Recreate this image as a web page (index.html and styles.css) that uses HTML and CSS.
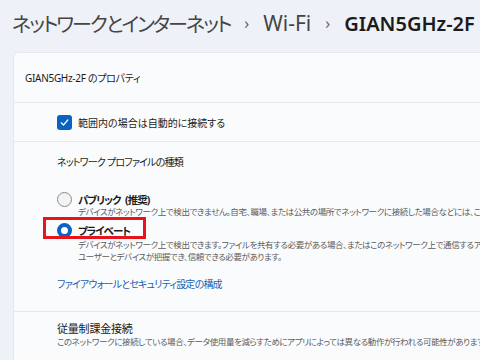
FILE: index.html
```html
<!DOCTYPE html>
<html lang="ja">
<head>
  <meta charset="UTF-8">
  <title>GIAN5GHz-2F のプロパティ</title>
  <link rel="stylesheet" href="styles.css">
</head>
<body>

  <!-- パンくず -->
  <div class="crumbs">
    <span class="crumb jp">ネットワークとインターネット</span>
    <span class="sep">›</span>
    <span class="crumb">Wi-Fi</span>
    <span class="sep">›</span>
    <span class="crumb current">GIAN5GHz-2F</span>
  </div>

  <div class="card">
    <div class="card-head">GIAN5GHz-2F のプロパティ</div>

    <div class="check-row">
      <span class="checkbox">
        <svg width="9" height="9" viewBox="0 0 9 9"><path d="M1.2 4.8 L3.5 7 L7.8 2" fill="none" stroke="#fff" stroke-width="1.2" stroke-linecap="round" stroke-linejoin="round"/></svg>
      </span>
      <span>範囲内の場合は自動的に接続する</span>
    </div>

    <div class="section profile">
      <div class="section-title">ネットワーク プロファイルの種類</div>

      <div class="radio-row public">
        <span class="radio"></span>
        <span class="radio-label">パブリック (推奨)</span>
      </div>
      <div class="desc indent">デバイスがネットワーク上で検出できません。自宅、職場、または公共の場所でネットワークに接続した場合などには、これを使用します。</div>

      <div class="radio-row private">
        <span class="radio checked"></span>
        <span class="radio-label">プライベート</span>
        <span class="mark"></span>
      </div>
      <div class="desc indent first">デバイスがネットワーク上で検出できます。ファイルを共有する必要がある場合、またはこのネットワーク上で通信するアプリを使用する場合に選択します。</div>
      <div class="desc indent">ユーザーとデバイスが把握でき、信頼できる必要があります。</div>

      <div class="link">ファイアウォールとセキュリティ設定の構成</div>
    </div>

    <div class="section metered">
      <div class="metered-title">従量制課金接続</div>
      <div class="desc">このネットワークに接続している場合、データ使用量を減らすためにアプリによっては異なる動作が行われる可能性があります</div>
    </div>
  </div>

</body>
</html>
```

FILE: styles.css
```css
body {
  margin: 0;
  background-color: #eef2f8;
  font-family: "Noto Sans", "Noto Sans CJK JP", sans-serif;
  font-feature-settings: "palt";
  color: #1b1b1b;
  overflow: hidden;
  height: 360px;
}

/* パンくず */
.crumbs {
  display: flex;
  align-items: center;
  gap: 14px;
  height: 46px;
  padding-left: 12px;
  font-size: 21px;
  color: #454545;
  white-space: nowrap;
}

.crumb.jp {
  font-size: 20px;
  letter-spacing: -2px;
}

.sep {
  font-size: 16px;
  color: #666;
}

.crumb.current {
  color: #1b1b1b;
  font-size: 20px;
  font-weight: 600;
}

/* カード */
.card {
  margin-top: 6px;
  margin-left: 13px;
  width: 520px;
  background-color: #fafbfd;
  border: 1px solid #e4e7ec;
  border-radius: 5px;
  font-size: 10px;
  letter-spacing: -0.4px;
  white-space: nowrap;
}

.card-head {
  height: 49px;
  display: flex;
  align-items: center;
  padding-left: 11px;
  font-size: 10px;
  letter-spacing: -0.3px;
  border-bottom: 1px solid #e6e9ee;
}

.check-row {
  height: 38px;
  display: flex;
  align-items: center;
  gap: 6px;
  padding-left: 43px;
  letter-spacing: 0;
  border-bottom: 1px solid #e6e9ee;
}

.checkbox {
  width: 15px;
  height: 15px;
  border-radius: 3px;
  background-color: #0a62c2;
  display: flex;
  align-items: center;
  justify-content: center;
}

.section {
  padding-left: 43px;
}

.profile {
  padding-top: 13px;
  padding-bottom: 20px;
  border-bottom: 1px solid #e6e9ee;
}

.section-title {
  line-height: 14px;
  margin-bottom: 23px;
  letter-spacing: -0.8px;
}

.radio-row {
  position: relative;
  display: flex;
  align-items: center;
  gap: 6px;
  height: 14px;
}

.radio {
  width: 13px;
  height: 13px;
  border: 1px solid #8a8a8a;
  border-radius: 50%;
  background-color: #f3f3f3;
}

.radio.checked {
  width: 7px;
  height: 7px;
  border: 4px solid #0a62c2;
  background-color: #fff;
}

.radio-label {
  font-weight: 700;
  font-size: 10.5px;
  letter-spacing: -1px;
  word-spacing: 3px;
}

.private {
  margin-top: 5px;
}

/* 赤い枠 */
.mark {
  position: absolute;
  left: -14px;
  top: -6px;
  width: 103px;
  height: 22px;
  box-sizing: border-box;
  border: 3px solid #e8141c;
}

.desc {
  font-size: 8.5px;
  line-height: 12px;
  letter-spacing: -0.4px;
  color: #5c5c5c;
}

.indent {
  margin-left: 21px;
}

.desc.first {
  margin-top: 2px;
}

.link {
  margin-top: 14px;
  line-height: 14px;
  letter-spacing: -0.8px;
  color: #1a5fb0;
}

.metered {
  padding-top: 10px;
  padding-bottom: 20px;
}

.metered-title {
  font-size: 11px;
  line-height: 14px;
  letter-spacing: -0.2px;
}
```
